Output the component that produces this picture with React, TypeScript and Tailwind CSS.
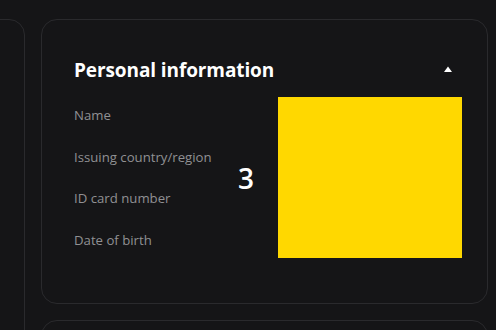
import React from 'react';

const fields = ['Name', 'Issuing country/region', 'ID card number', 'Date of birth'];

const App: React.FC = () => {
  return (
    <div className="w-[496px] h-[330px] overflow-hidden bg-[#151517] font-['Open_Sans','Noto_Sans',sans-serif]">
      <div className="flex gap-4 pt-[19px]">
        <div className="-ml-[40px] w-[65px] h-[400px] shrink-0 rounded-2xl border border-[#2a2a2d]"></div>
        <div className="flex flex-col gap-4 w-[447px] shrink-0">
          <div className="h-[285px] rounded-2xl border border-[#2a2a2d] pl-[32px] pr-[25px] pt-[38px]">
            <div className="flex items-center justify-between h-[24px]">
              <h2 className="text-[19px] leading-[24px] font-bold text-white tracking-[-0.1px]">Personal information</h2>
              <svg width="10" height="8" viewBox="0 0 10 8" className="mr-[9px] mb-[2px]">
                <path d="M1 7 L5 1.5 L9 7 Z" fill="#ffffff" />
              </svg>
            </div>
            <div className="flex mt-[15px]">
              <div className="flex flex-col gap-[21.7px] pt-[8px] w-[164px] shrink-0">
                {fields.map((f) => (
                  <span key={f} className="text-[13.2px] leading-[20px] text-[#909093]">{f}</span>
                ))}
              </div>
              <div className="flex items-center w-[40px] shrink-0">
                <span className="text-[28px] leading-none font-semibold text-white">3</span>
              </div>
              <div className="w-[184px] h-[161px] bg-[#ffd800] shrink-0"></div>
            </div>
          </div>
          <div className="h-[60px] rounded-2xl border border-[#2a2a2d]"></div>
        </div>
      </div>
    </div>
  );
};

export default App;
